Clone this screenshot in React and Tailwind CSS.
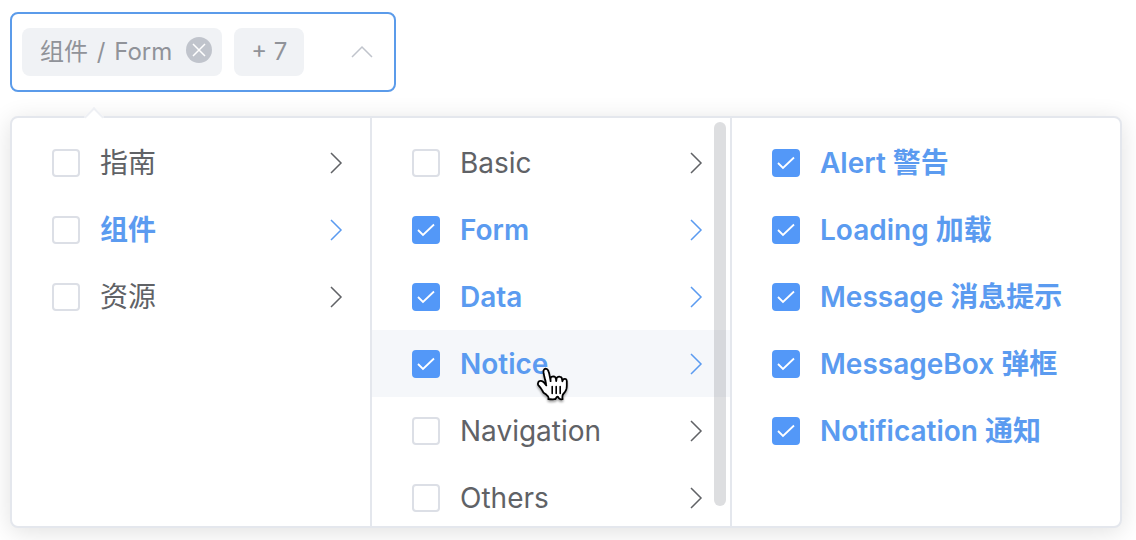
import { useState } from "react";
import clsx from "clsx";

const sections = [
  { id: "guide", label: "指南" },
  { id: "component", label: "组件", active: true },
  { id: "resource", label: "资源" },
];

const groups = [
  { id: "basic", label: "Basic" },
  { id: "form", label: "Form" },
  { id: "data", label: "Data" },
  { id: "notice", label: "Notice", hover: true },
  { id: "navigation", label: "Navigation" },
  { id: "others", label: "Others" },
];

const items = [
  { id: "alert", label: "Alert 警告" },
  { id: "loading", label: "Loading 加载" },
  { id: "message", label: "Message 消息提示" },
  { id: "message-box", label: "MessageBox 弹框" },
  { id: "notification", label: "Notification 通知" },
];

const initialChecked = [
  "form",
  "data",
  "notice",
  "alert",
  "loading",
  "message",
  "message-box",
  "notification",
];

function Checkbox({ id, checked, onChange }) {
  return (
    <span className="grid shrink-0">
      <input
        id={id}
        type="checkbox"
        checked={checked}
        onChange={onChange}
        className="peer col-start-1 row-start-1 size-7 appearance-none rounded border-2 border-[#dcdfe6] bg-white checked:border-[#5398f8] checked:bg-[#5398f8]"
      />
      <svg
        viewBox="0 0 28 28"
        className="pointer-events-none col-start-1 row-start-1 size-7 fill-none stroke-white stroke-[1.8] opacity-0 peer-checked:opacity-100"
      >
        <path d="M6 14l5 5L22 8.5" />
      </svg>
    </span>
  );
}

function Row({ node, checked, onToggle, expandable }) {
  const highlighted = node.active || checked;
  return (
    <li
      className={clsx(
        "flex h-[67px] items-center gap-5 pr-5 pl-10",
        node.hover && "bg-[#f5f7fa]",
        highlighted ? "font-semibold text-[#5b9bf0]" : "text-[#606266]"
      )}
    >
      <Checkbox id={node.id} checked={checked} onChange={() => onToggle(node.id)} />
      <label htmlFor={node.id} className="flex-1 whitespace-nowrap">
        {node.label}
      </label>
      {expandable && (
        <svg viewBox="0 0 28 28" className="size-7 shrink-0 fill-none stroke-current stroke-[1.5]">
          <path d="M9 4l10 10L9 24" />
        </svg>
      )}
    </li>
  );
}

function Menu({ nodes, checked, onToggle, expandable, className, children }) {
  return (
    <div className={clsx("relative h-[408px] overflow-hidden", className)}>
      <ul className="pt-[11px]">
        {nodes.map((node) => (
          <Row
            key={node.id}
            node={node}
            checked={checked.includes(node.id)}
            onToggle={onToggle}
            expandable={expandable}
          />
        ))}
      </ul>
      {children}
    </div>
  );
}

function PointerCursor() {
  return (
    <svg
      viewBox="7 7 19 19"
      className="pointer-events-none absolute top-[366px] left-[535px] size-[38px] overflow-visible drop-shadow-[0_2px_1px_rgba(0,0,0,0.35)]"
    >
      <path
        d="M11.3 20.4c-.3-.4-.6-1.1-1.2-2-.3-.5-1.2-1.5-1.5-1.9-.2-.4-.2-.6-.1-1 .1-.6.7-1.1 1.4-1.1.5 0 1 .4 1.4.7.2.2.5.6.7.8.2.2.2.3.4.5.2.3.3.5.2.1-.1-.5-.2-1.3-.4-2.1-.1-.6-.2-.7-.3-1.1-.1-.5-.2-.8-.3-1.3-.1-.3-.2-1.1-.3-1.5-.1-.5-.1-1.4.3-1.8.3-.3.9-.4 1.3-.2.5.3.8 1 .9 1.3.2.5.4 1.2.5 2 .2 1 .5 2.5.5 2.8 0-.4-.1-1.1 0-1.5.1-.3.3-.7.7-.8.3-.1.6-.1.9-.1.3.1.6.3.8.5.4.6.4 1.9.4 1.8.1-.4.1-1.2.3-1.6.1-.2.5-.4.7-.5.3-.1.7-.1 1 0 .2 0 .6.3.7.5.2.3.3 1.3.4 1.7 0 .1.1-.4.3-.7.4-.6 1.8-.8 1.9.6v2.3c0 .4-.1 1.3-.2 1.7-.1.3-.4 1-.7 1.4 0 0-1.1 1.2-1.2 1.8-.1.6-.1.6-.1 1 0 .4.1.9.1.9s-.8.1-1.2 0c-.4-.1-.9-.8-1-1.1-.2-.3-.5-.3-.7 0-.2.4-.7 1.1-1.1 1.1-.7.1-2.1 0-3.1 0 0 0 .2-1-.2-1.4-.3-.3-.8-.8-1.1-1.1z"
        fill="#fff"
        stroke="#000"
        strokeWidth="0.9"
        strokeLinejoin="round"
      />
      <path
        d="M19.6 20.7v-3.4M17.6 20.7v-3.4M15.6 17.3v3.4"
        fill="none"
        stroke="#000"
        strokeWidth="0.8"
        strokeLinecap="round"
      />
    </svg>
  );
}

export default function App() {
  const [checked, setChecked] = useState(initialChecked);
  const [open, setOpen] = useState(true);

  function toggle(id) {
    setChecked((prev) => (prev.includes(id) ? prev.filter((c) => c !== id) : [...prev, id]));
  }

  return (
    <main className="relative bg-white pt-3 pr-3.5 pb-3 pl-2.5 font-[Inter,'Noto_Sans_CJK_SC',sans-serif]">
      <div className="flex h-20 w-[386px] items-center gap-3 rounded-lg border-2 border-[#5b9bea] px-2.5 text-2xl text-[#909399]">
        <span className="flex h-12 items-center gap-3.5 rounded-lg bg-[#f0f2f5] pr-2.5 pl-[18px] whitespace-nowrap">
          <span>
            组件 <span className="mx-0.5">/</span> Form
          </span>
          <button aria-label="移除" className="mb-1 size-[26px] rounded-full bg-[#c0c4cc]">
            <svg viewBox="0 0 26 26" className="fill-none stroke-white stroke-[1.5]">
              <path d="M7 7l12 12M19 7L7 19" />
            </svg>
          </button>
        </span>
        <span className="flex h-12 items-center rounded-lg bg-[#f0f2f5] px-[17px] whitespace-nowrap">
          + 7
        </span>
        <button
          aria-label="展开"
          aria-expanded={open}
          onClick={() => setOpen(!open)}
          className="mr-2 ml-auto"
        >
          <svg viewBox="0 0 28 28" className="size-7 fill-none stroke-[#c0c4cc] stroke-[1.5]">
            <path d="M4 19l10-10 10 10" />
          </svg>
        </button>
      </div>

      {open && (
        <section className="relative mt-6 flex rounded-lg border-2 border-[#e4e7ed] bg-white text-[28px] leading-10 shadow-[0_4px_24px_rgba(0,0,0,0.12)]">
          <span className="absolute -top-2 left-[75px] size-3.5 rotate-45 border-t-2 border-l-2 border-[#eef0f4] bg-white" />
          <Menu
            nodes={sections}
            checked={checked}
            onToggle={toggle}
            expandable
            className="w-[360px] border-r-2 border-[#e4e7ed]"
          />
          <Menu
            nodes={groups}
            checked={checked}
            onToggle={toggle}
            expandable
            className="w-[360px] border-r-2 border-[#e4e7ed]"
          >
            <div className="absolute top-1 right-1 h-96 w-3 rounded-full bg-[#909399]/30" />
          </Menu>
          <Menu nodes={items} checked={checked} onToggle={toggle} className="flex-1" />
        </section>
      )}
      <PointerCursor />
    </main>
  );
}
